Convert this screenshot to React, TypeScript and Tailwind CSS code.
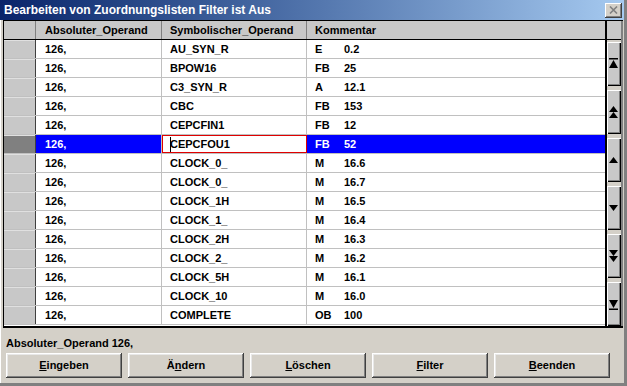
import React from "react";

const rows: [string, string, string][] = [
  ["AU_SYN_R", "E", "0.2"],
  ["BPOW16", "FB", "25"],
  ["C3_SYN_R", "A", "12.1"],
  ["CBC", "FB", "153"],
  ["CEPCFIN1", "FB", "12"],
  ["CEPCFOU1", "FB", "52"],
  ["CLOCK_0_", "M", "16.6"],
  ["CLOCK_0_", "M", "16.7"],
  ["CLOCK_1H", "M", "16.5"],
  ["CLOCK_1_", "M", "16.4"],
  ["CLOCK_2H", "M", "16.3"],
  ["CLOCK_2_", "M", "16.2"],
  ["CLOCK_5H", "M", "16.1"],
  ["CLOCK_10", "M", "16.0"],
  ["COMPLETE", "OB", "100"],
];

const SEL = 5;

function Icon({ kind }: { kind: string }) {
  const up = "M1 7 L5.5 1 L10 7 Z";
  const down = "M1 1 L5.5 7 L10 1 Z";
  return (
    <svg width="11" height="16" viewBox="0 0 11 16">
      {kind === "top" && (
        <>
          <rect x="1" y="2" width="9" height="1.5" fill="#000" />
          <path d="M1 12 L5.5 4 L10 12 Z" fill="#000" />
        </>
      )}
      {kind === "pgup" && (
        <>
          <path d="M1 8 L5.5 2 L10 8 Z" fill="#000" />
          <path d="M1 14 L5.5 8 L10 14 Z" fill="#000" />
        </>
      )}
      {kind === "up" && <path d={up} fill="#000" transform="translate(0,4)" />}
      {kind === "down" && <path d={down} fill="#000" transform="translate(0,4)" />}
      {kind === "pgdn" && (
        <>
          <path d="M1 2 L5.5 8 L10 2 Z" fill="#000" />
          <path d="M1 8 L5.5 14 L10 8 Z" fill="#000" />
        </>
      )}
      {kind === "bot" && (
        <>
          <path d="M1 4 L5.5 12 L10 4 Z" fill="#000" />
          <rect x="1" y="12.5" width="9" height="1.5" fill="#000" />
        </>
      )}
    </svg>
  );
}

function ScrollBtn({ kind }: { kind: string }) {
  return (
    <div className="h-[44px] w-full flex items-center justify-center bg-[#c8c8c8] shadow-[inset_1px_1px_#ffffff,inset_-1px_-1px_#000000,inset_-2px_-2px_#808080]">
      <Icon kind={kind} />
    </div>
  );
}

function Btn({ pre, u, post }: { pre: string; u: string; post: string }) {
  return (
    <div className="w-[116px] h-[25px] flex items-center justify-center bg-[#d4d0c8] shadow-[inset_-1px_-1px_#404040,inset_1px_1px_#ffffff,inset_-2px_-2px_#808080,inset_2px_2px_#e8e8e8] text-[11px] font-bold text-black">
      <span>
        {pre}
        <span className="underline">{u}</span>
        {post}
      </span>
    </div>
  );
}

export default function App() {
  return (
    <div
      className="w-[627px] h-[386px] bg-[#d4d0c8] flex flex-col overflow-hidden border-r-[3px] border-b-[3px] border-r-[#808080] border-b-[#808080] shadow-[inset_1px_0_#ffffff]"
      style={{ fontFamily: '"Liberation Sans", Arial, sans-serif' }}
    >
      {/* Title bar */}
      <div className="h-[20px] flex items-center justify-between pl-[4px] pr-[2px] bg-gradient-to-r from-[#0a246a] to-[#a6caf0]">
        <span className="text-white font-bold text-[12px] leading-none">
          Bearbeiten von Zuordnungslisten Filter ist Aus
        </span>
        <div className="w-[17px] h-[15px] flex items-center justify-center bg-[#d4d0c8] shadow-[inset_-1px_-1px_#404040,inset_1px_1px_#ffffff,inset_-2px_-2px_#808080]">
          <svg width="9" height="8" viewBox="0 0 9 8">
            <path d="M1 0.5 L8 7.5 M8 0.5 L1 7.5" stroke="#808080" strokeWidth="1.6" />
          </svg>
        </div>
      </div>

      {/* Table */}
      <div className="ml-[3px] w-[620px] flex border-t border-l border-b-2 border-black bg-white">
        <div className="w-[601px] flex flex-col">
          {/* Header */}
          <div className="flex h-[19px] border-b border-black text-[11px] font-bold text-black">
            <div className="w-[32px] bg-[#c8c8c8] border-r border-[#808080]" />
            <div className="w-[126px] bg-[#c8c8c8] border-r border-[#808080] pl-[9px] flex items-center">
              Absoluter_Operand
            </div>
            <div className="w-[145px] bg-[#c8c8c8] border-r border-[#808080] pl-[8px] flex items-center">
              Symbolischer_Operand
            </div>
            <div className="w-[298px] bg-[#c8c8c8] pl-[8px] flex items-center">Kommentar</div>
          </div>
          {rows.map((r, i) => {
            const sel = i === SEL;
            return (
              <div
                key={i}
                className={`flex h-[19px] border-b text-[11px] font-bold ${
                  sel ? "border-[#c0c0c0] text-white" : "border-[#c0c0c0] text-black"
                }`}
              >
                <div
                  className={`w-[32px] border-r border-[#404040] shadow-[inset_0_1px_#e0e0e0] ${
                    sel ? "bg-[#808080]" : "bg-[#c8c8c8]"
                  }`}
                />
                <div
                  className={`w-[126px] border-r border-[#c0c0c0] pl-[9px] flex items-center ${
                    sel ? "bg-[#0000ff]" : ""
                  }`}
                >
                  126,
                </div>
                {sel ? (
                  <div className="w-[145px] border border-[#e00000] bg-white text-black pl-[7px] flex items-center relative">
                    <span className="absolute left-[7px] top-[1px] w-px h-[15px] bg-black" />
                    {r[0]}
                  </div>
                ) : (
                  <div className="w-[145px] border-r border-[#c0c0c0] pl-[8px] flex items-center">{r[0]}</div>
                )}
                <div className={`w-[298px] pl-[8px] flex items-center ${sel ? "bg-[#0000ff]" : ""}`}>
                  <span className="w-[29px]">{r[1]}</span>
                  <span>{r[2]}</span>
                </div>
              </div>
            );
          })}
        </div>
        <div className="w-[2px] bg-black" />
        <div className="w-[15px] flex flex-col bg-[#d4d0c8]">
          <div className="h-[19px] bg-[#c8c8c8] border-b border-black" />
          <div className="flex flex-col gap-[4px] pt-[2px] px-[0px]">
            <ScrollBtn kind="top" />
            <ScrollBtn kind="pgup" />
            <ScrollBtn kind="up" />
            <ScrollBtn kind="down" />
            <ScrollBtn kind="pgdn" />
            <ScrollBtn kind="bot" />
          </div>
        </div>
        <div className="w-[2px] bg-[#808080]" />
      </div>

      {/* Status */}
      <div className="pl-[6px] pt-[10px] h-[25px] text-[11px] font-bold text-black leading-none">
        Absoluter_Operand 126,
      </div>
      <div className="flex gap-[6px] pl-[6px]">
        <Btn pre="" u="E" post="ingeben" />
        <Btn pre="Ä" u="n" post="dern" />
        <Btn pre="" u="L" post="öschen" />
        <Btn pre="" u="F" post="ilter" />
        <Btn pre="" u="B" post="eenden" />
      </div>
    </div>
  );
}
